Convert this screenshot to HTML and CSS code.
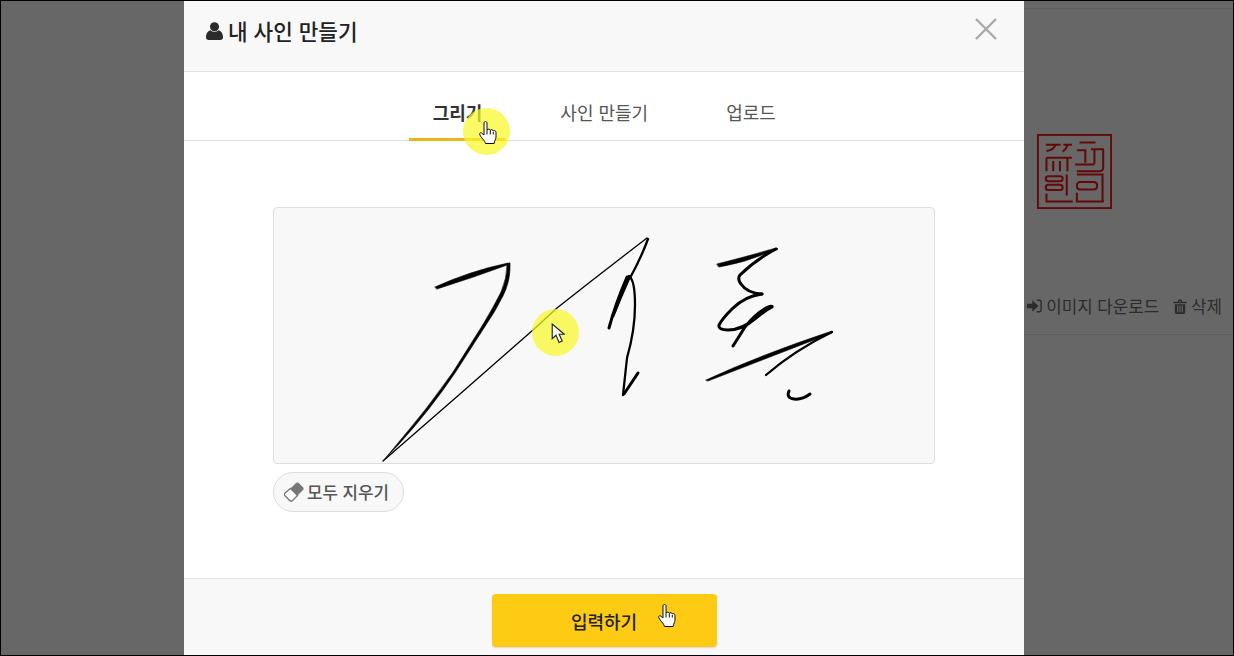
FILE: index.html
```html
<!DOCTYPE html>
<html lang="ko">
<head>
<meta charset="utf-8">
<title>내 사인 만들기</title>
<link rel="stylesheet" href="styles.css">
</head>
<body>
<div class="frame">
  <div class="spacer"></div>
  <main class="modal">
    <header class="modal-head">
      <h1 class="title">
        <svg class="user-icon" viewBox="0 0 18 19"><circle cx="9" cy="5" r="4.8"/><path d="M0 16.2C0 11.5 2.5 9 5 8.6c1 1.2 2.4 1.8 4 1.8s3-.6 4-1.8c2.5.4 5 2.9 5 7.6 0 1.800-1.200 2.800-3 2.800H3c-1.800 0-3-1-3-2.800z"/></svg>
        <span>내 사인 만들기</span>
      </h1>
      <svg class="close" viewBox="0 0 22 22"><path d="M1 1l20 20M21 1L1 21"/></svg>
    </header>
    <nav class="tabs">
      <span class="tab active">그리기</span>
      <span class="tab">사인 만들기</span>
      <span class="tab">업로드</span>
    </nav>
    <section class="body">
      <div class="pad">
        <svg class="sign" viewBox="273 207 662 257">
          <g class="fill">
            <path d="M435 287Q470 271 508 263L510 264Q475 277 437 289Z"/>
            <path d="M510 263Q511 280 503 296Q495 312 484 328L455 373Q430 410 400 443L383 461L398 443Q428 408 453 372L482 326Q493 308 501 292Q507 278 507 265Z"/>
            <path d="M717 264Q745 257 776 248L778 249Q760 256 745 261Q730 265 719 267Z"/>
            <path d="M706 380Q760 355 832 331L832 333Q770 357 708 381Z"/>
          </g>
          <g class="w3">
            <path d="M762 294Q745 296 732 309Q722 319 719 325Q718 330 728 330Q742 330 756 318Q766 310 772 307Q773 305 766 308Q755 314 745 327L733 346"/>
            <path d="M789 391Q786 398 794 399Q802 400 810 394"/>
            <path d="M624 394L638 373"/>
            <path d="M609 328Q615 305 627 277"/>
            <path d="M613 316Q620 298 629 278"/>
            <path d="M776 249Q755 260 740 275Q737 279 741 284Q747 293 762 294"/>
          </g>
          <g class="w2">
            <path d="M648 239Q641 258 630 278"/>
            <path d="M612 318Q620 298 629 276Q635 280 635 305Q635 330 627 358L623 395"/>
            <path d="M832 332Q795 350 766 375"/>
          </g>
          <g class="w1"><path d="M383 461L460 394L533 330L557 308Q600 274 647 238"/></g>
        </svg>
      </div>
      <button class="clear" type="button">
        <svg class="eraser" viewBox="0 0 20 20"><path class="er-top" d="M6.500 6.500L12 1c.8-.8 2-.8 2.800 0L19 5.200c.8.800.8 2 0 2.800L13.500 13.500z"/><path class="er-low" d="M6.500 6.500L13.500 13.500 8.500 18.500c-.8.800-2 .8-2.800 0L1 13.800c-.8-.8-.8-2 0-2.800z"/></svg>
        <span>모두 지우기</span>
      </button>
    </section>
    <footer class="foot">
      <button class="submit" type="button">입력하기</button>
    </footer>
  </main>
  <aside class="side">
    <svg class="seal" viewBox="52 40 222 222">
      <rect x="54.500" y="42.500" width="217" height="217"/>
      <path d="M78 72H122M106 72Q104 86 80 90M130 72H155M142 72Q140 84 128 92M80 110H155M80 110V150M100 120V150M120 120V150M142 110V150"/>
      <path d="M178 65H225M170 88H195V125M212 85H250M222 85V128M165 130H222M248 85V140Q248 150 238 150H170"/>
      <path d="M85 165H120Q128 165 128 172Q128 180 120 180H85Q78 180 78 172Q78 165 85 165zM85 190H120Q128 190 128 198Q128 206 120 206H85Q78 206 78 198Q78 190 85 190zM140 160V222M80 216V240H158"/>
      <path d="M170 160H246V240M180 182H220Q230 182 230 193Q230 204 220 204H180Q170 204 170 193Q170 182 180 182zM170 214V240H250"/>
    </svg>
    <div class="actions">
      <span class="action">
        <svg class="act-icon" viewBox="0 0 17 15"><path d="M0 5h6V1l7 6.500-7 6.500v-4H0z"/><path class="bracket" d="M11 1h3c1.300 0 2 .8 2 2v9c0 1.200-.7 2-2 2h-3"/></svg>
        이미지 다운로드
      </span>
      <span class="action">
        <svg class="act-icon trash" viewBox="0 0 14 16"><path d="M0 3h14v1.500H0zM4.500 3l1-2.500h3l1 2.500H8L7.700 2H6.300L6 3zM1.500 5.500h11V14c0 1-.7 2-1.700 2H3.200c-1 0-1.700-1-1.700-2zM4 7v7h1.200V7zM6.400 7v7h1.200V7zM8.800 7v7H10V7z" fill-rule="evenodd"/></svg>
        삭제
      </span>
    </div>
  </aside>

  <div class="spot spot-tab"></div>
  <div class="spot spot-pad"></div>
  <svg class="cursor hand hand-tab" viewBox="0 0 18 24"><path d="M5 2c0-2 3-2 3 0v7c.5-1.200 3-1.200 3.300.3.500-1 2.800-.8 3 .7.600-.8 2.700-.5 2.700 1.300V16c0 2-1.500 3.500-1.800 6.500H6.500C6 20 3.500 18 1.500 15 0 13 .8 11 2.500 12L5 14z"/><path d="M8 9v4.500M11.300 9.300v4.200M14.300 11v2.500"/></svg>
  <svg class="cursor arrow" viewBox="0 0 13 20"><path d="M1 1v14l3.600-3.300L7.500 18.500l3-1.300-2.900-6.500H12.500z"/></svg>
  <svg class="cursor hand hand-btn" viewBox="0 0 18 24"><path d="M5 2c0-2 3-2 3 0v7c.5-1.200 3-1.200 3.300.3.500-1 2.800-.8 3 .7.600-.8 2.700-.5 2.700 1.300V16c0 2-1.500 3.500-1.800 6.500H6.500C6 20 3.500 18 1.500 15 0 13 .8 11 2.500 12L5 14z"/><path d="M8 9v4.500M11.300 9.300v4.200M14.300 11v2.500"/></svg>
</div>
</body>
</html>
```
FILE: styles.css
```css
* { box-sizing: border-box; }
html, body { margin: 0; padding: 0; }
body { font-family: "Noto Sans CJK KR", "Noto Sans", sans-serif; color: #222; overflow: hidden; }

.frame {
  position: relative;
  width: 1234px;
  height: 656px;
  border: 1px solid #000;
  background: #676767;
  display: flex;
  overflow: hidden;
}
.spacer { width: 183px; flex: none; }

.modal { width: 840px; flex: none; height: 654px; background: #fff; display: flex; flex-direction: column; }

.modal-head {
  height: 71px;
  flex: none;
  background: #f8f8f8;
  border-bottom: 1px solid #e2e2e2;
  display: flex;
  justify-content: space-between;
  align-items: flex-start;
  padding: 14px 27px 0 22px;
}
.title { margin: 0; display: flex; align-items: center; gap: 5px; font-size: 21.3px; font-weight: 500; line-height: 32px; color: #222; }
.user-icon { width: 17px; height: 18px; fill: #2b2b2b; flex: none; }
.close { width: 22px; height: 22px; margin-top: 3px; fill: none; stroke: #a9a9a9; stroke-width: 2.4; }

.tabs {
  height: 69px;
  flex: none;
  border-bottom: 1px solid #ddd;
  display: flex;
  justify-content: center;
  gap: 30px;
  padding-left: .5px;
}
.tab { padding: 27px 24px 0; margin-bottom: -1px; font-size: 18px; line-height: 26px; color: #555; font-weight: 400; border-bottom: 3px solid transparent; }
.tab.active { color: #333; font-weight: 700; border-bottom-color: #efb31e; }

.body { flex: 1; padding: 66px 89px 0; display: flex; flex-direction: column; align-items: flex-start; }
.pad { width: 662px; height: 257px; flex: none; background: #f8f8f8; border: 1px solid #dedede; border-radius: 4px; overflow: hidden; position: relative; }
.sign { position: absolute; left: -1px; top: -1px; width: 662px; height: 257px; fill: none; stroke: #000; stroke-linecap: round; stroke-linejoin: round; }
.fill { fill: #000; stroke-width: .6; }
.w3 { stroke-width: 3; }
.w2 { stroke-width: 2.300; }
.w1 { stroke-width: 1.300; }

.clear {
  margin-top: 8px;
  width: 131px;
  height: 40px;
  padding: 0 0 0 10px;
  border: 1px solid #ddd;
  border-radius: 20px;
  background: #f8f8f8;
  display: flex;
  align-items: center;
  gap: 3px;
  font-family: inherit;
  font-size: 16.8px;
  font-weight: 500;
  color: #555;
}
.eraser { width: 20px; height: 20px; flex: none; }
.er-top { fill: #777; }
.er-low { fill: #fff; stroke: #777; stroke-width: 1.400; }

.foot { height: 77px; flex: none; background: #f8f8f8; border-top: 1px solid #e2e2e2; display: flex; justify-content: center; padding-top: 15px; }
.submit {
  width: 225px;
  height: 53px;
  border: 0;
  border-radius: 4px;
  background: #fdcb13;
  box-shadow: 0 1px 2px rgba(0, 0, 0, .15);
  font-family: inherit;
  font-size: 18px;
  font-weight: 500;
  color: #222;
}

.side { flex: 1; display: flex; flex-direction: column; margin-top: 7px; border-top: 1px solid #5c5c5c; height: 327px; border-bottom: 1px solid #5c5c5c; }
.seal { width: 75px; height: 75px; margin: 125px 0 0 13px; fill: none; stroke: #650808; stroke-width: 6; flex: none; }
.actions { margin-top: 85px; display: flex; gap: 14px; justify-content: flex-end; padding-right: 11px; }
.action { display: flex; align-items: center; gap: 4px; font-size: 16.800px; line-height: 24px; color: #2c2c2c; }
.act-icon { width: 15px; height: 14px; fill: #2c2c2c; flex: none; }
.bracket { fill: none; stroke: #2c2c2c; stroke-width: 1.600; }
.trash { width: 14px; height: 15px; }

.spot { position: absolute; width: 47px; height: 47px; border-radius: 50%; background: rgba(248, 248, 40, .72); }
.spot-tab { left: 462px; top: 107px; }
.spot-pad { left: 531px; top: 308px; }

.cursor { position: absolute; }
.hand { width: 18px; height: 24px; fill: #fff; stroke: #111; stroke-width: 1; }
.hand-tab { left: 478px; top: 120px; }
.hand-btn { left: 657px; top: 603px; }
.arrow { left: 550px; top: 322px; width: 14px; height: 21px; fill: #fff; stroke: #222; stroke-width: 1.100; }
```
